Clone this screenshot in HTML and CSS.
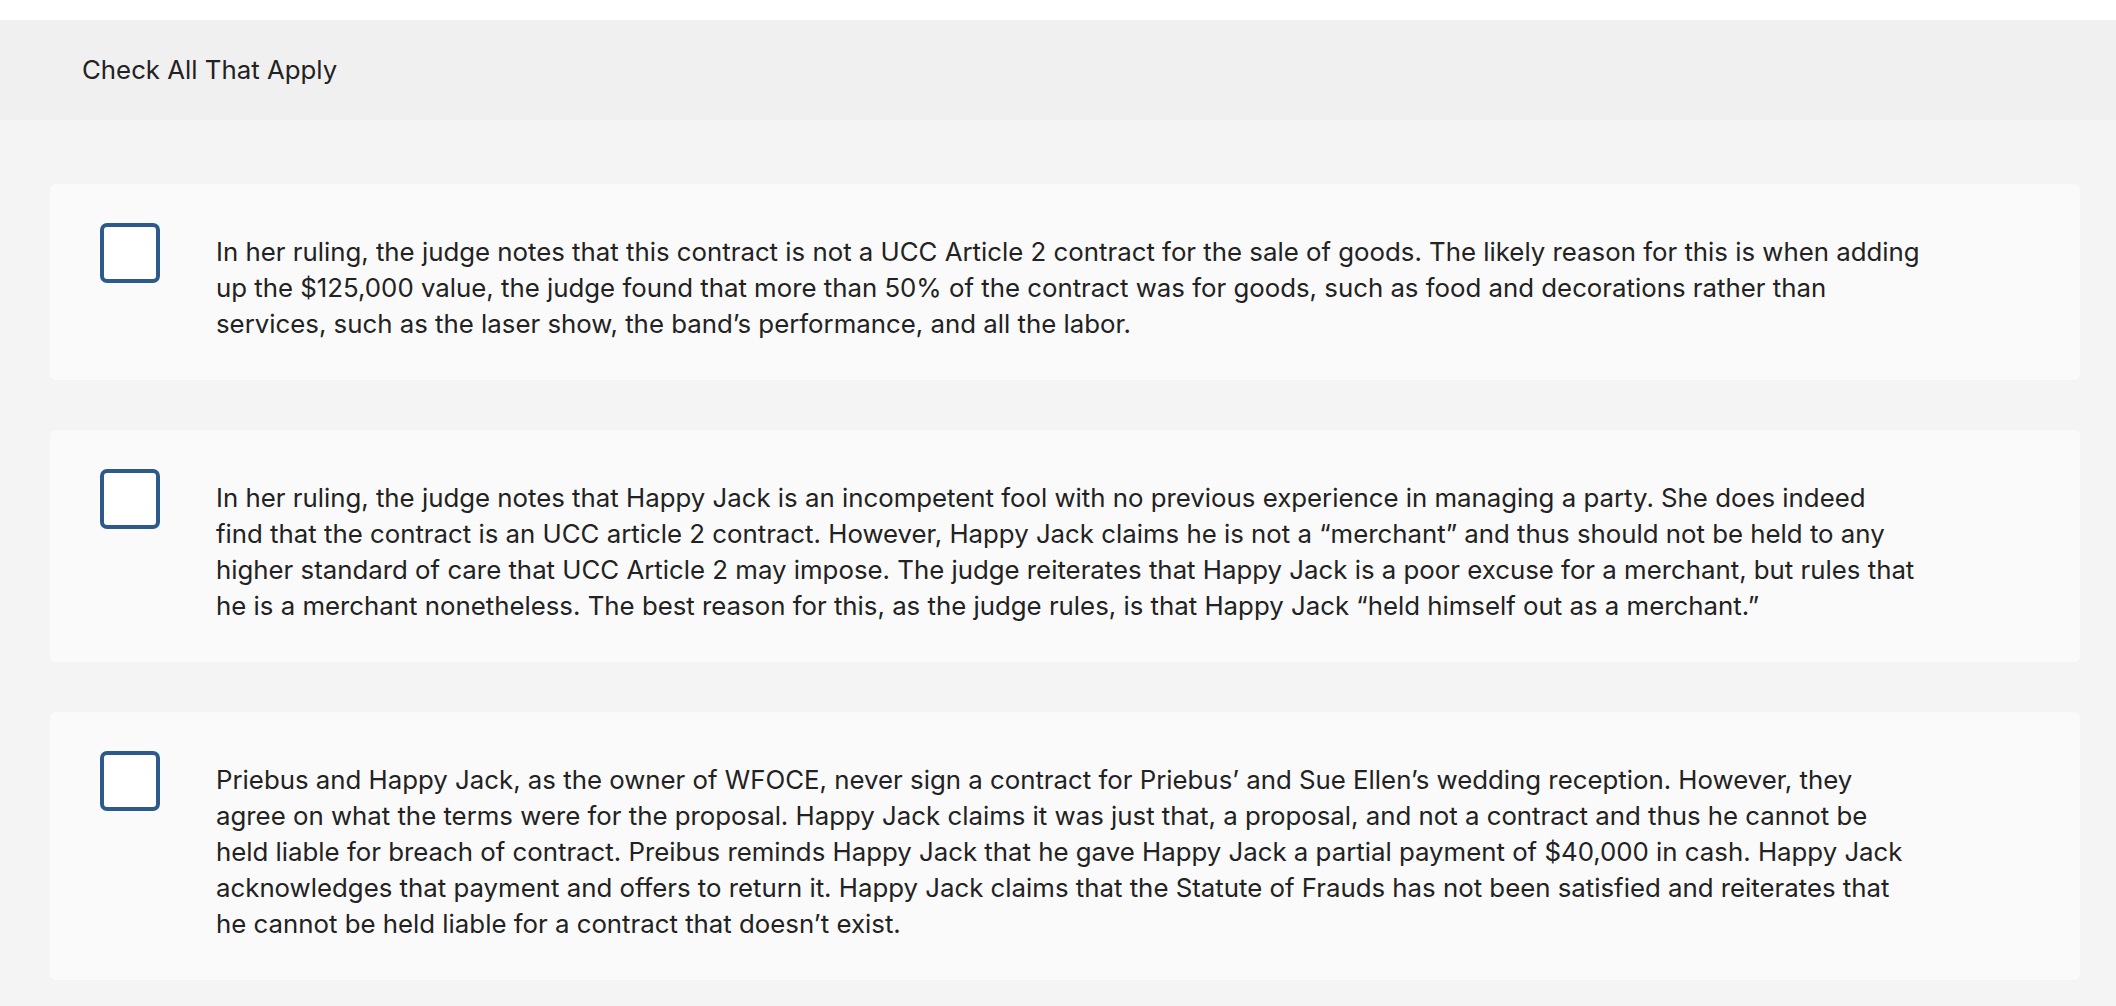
FILE: index.html
```html
<!DOCTYPE html>
<html lang="en">
<head>
<meta charset="utf-8">
<title>Check All That Apply</title>
<link rel="stylesheet" href="styles.css">
</head>
<body>
<div class="page">
  <div class="header">Check All That Apply</div>
  <div class="choices">
    <label class="choice">
      <span class="box"></span>
      <span class="text">In her ruling, the judge notes that this contract is not a UCC Article 2 contract for the sale of goods. The likely reason for this is when adding<br>up the $125,000 value, the judge found that more than 50% of the contract was for goods, such as food and decorations rather than<br>services, such as the laser show, the band’s performance, and all the labor.</span>
    </label>
    <label class="choice">
      <span class="box"></span>
      <span class="text">In her ruling, the judge notes that Happy Jack is an incompetent fool with no previous experience in managing a party. She does indeed<br>find that the contract is an UCC article 2 contract. However, Happy Jack claims he is not a “merchant” and thus should not be held to any<br>higher standard of care that UCC Article 2 may impose. The judge reiterates that Happy Jack is a poor excuse for a merchant, but rules that<br>he is a merchant nonetheless. The best reason for this, as the judge rules, is that Happy Jack “held himself out as a merchant.”</span>
    </label>
    <label class="choice">
      <span class="box"></span>
      <span class="text">Priebus and Happy Jack, as the owner of WFOCE, never sign a contract for Priebus’ and Sue Ellen’s wedding reception. However, they<br>agree on what the terms were for the proposal. Happy Jack claims it was just that, a proposal, and not a contract and thus he cannot be<br>held liable for breach of contract. Preibus reminds Happy Jack that he gave Happy Jack a partial payment of $40,000 in cash. Happy Jack<br>acknowledges that payment and offers to return it. Happy Jack claims that the Statute of Frauds has not been satisfied and reiterates that<br>he cannot be held liable for a contract that doesn’t exist.</span>
    </label>
  </div>
</div>
</body>
</html>
```
FILE: styles.css
```css
html, body {
  margin: 0;
  padding: 0;
  background: #ffffff;
}
body {
  font-family: "Inter", "Noto Sans", sans-serif;
  font-size: 25.8px;
  color: #222222;
}
.page {
  padding-top: 20px;
  min-height: 986px;
  background: linear-gradient(#ffffff 0, #ffffff 20px, #f4f4f4 20px);
}
.header {
  height: 100px;
  display: flex;
  align-items: center;
  padding-left: 82px;
  background: #f0f0f0;
  border-top-left-radius: 4px;
  line-height: 36px;
}
.choices {
  display: flex;
  flex-direction: column;
  gap: 50px;
  padding: 64px 36px 27px 50px;
  background: #f4f4f4;
}
.choice {
  display: flex;
  align-items: flex-start;
  padding: 39px 50px 38px 50px;
  background: #fafafa;
  border-radius: 6px;
}
.box {
  flex: none;
  width: 60px;
  height: 60px;
  box-sizing: border-box;
  border: 4px solid #2c5a8b;
  border-radius: 7px;
  background: #ffffff;
  margin-right: 56px;
}
.text {
  flex: 1;
  margin-top: 11px;
  line-height: 36px;
  white-space: nowrap;
}
```
